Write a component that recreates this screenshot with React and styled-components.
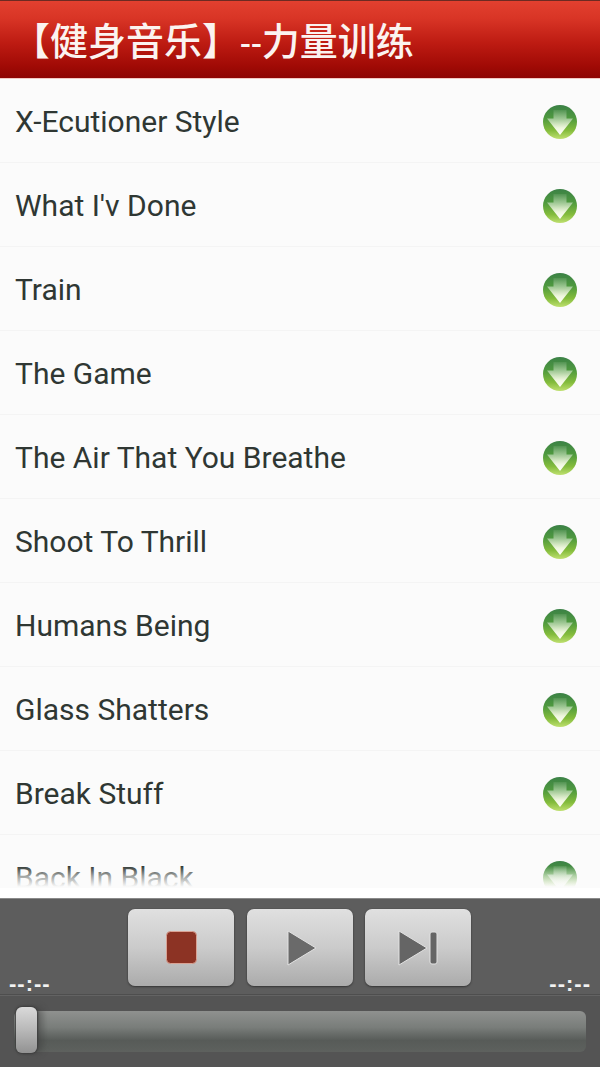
import React from "react";
import styled, { createGlobalStyle } from "styled-components";

const Global = createGlobalStyle`
  html, body { margin: 0; padding: 0; background: #fff; }
  #root { width: 600px; height: 1067px; overflow: hidden; }
`;

const Page = styled.div`
  width: 600px;
  height: 1067px;
  display: flex;
  flex-direction: column;
  font-family: Roboto, "Noto Sans CJK SC", sans-serif;
`;

const Header = styled.header`
  height: 79px;
  box-sizing: border-box;
  flex: none;
  display: flex;
  align-items: center;
  padding: 0 0 0 12px;
  border-top: 1px solid #6d2a22;
  border-bottom: 1px solid #f3c9c4;
  background: linear-gradient(180deg, #e2402f 0%, #d93526 22%, #bd1b12 55%, #a00a05 85%, #8e0503 100%);
`;

const Title = styled.h1`
  margin: 0;
  color: #fbf3f0;
  font: 500 38px/1 "Noto Sans CJK SC", sans-serif;
  white-space: nowrap;
`;

const Dash = styled.span`
  font-family: Roboto, sans-serif;
  font-size: 32px;
`;

const ListArea = styled.div`
  position: relative;
  height: 809px;
  flex: none;
  overflow: hidden;
  background: #fbfbfb;
`;

const Row = styled.div`
  height: 84px;
  box-sizing: border-box;
  display: flex;
  align-items: center;
  justify-content: space-between;
  padding: 2px 22px 0 15px;
  border-bottom: 1px solid #f4f4f4;
`;

const Song = styled.span`
  color: #2f3733;
  font: 400 30px/1 Roboto, sans-serif;
  white-space: nowrap;
`;

const Fade = styled.div`
  position: absolute;
  left: 0;
  right: 0;
  bottom: 0;
  height: 22px;
  background: linear-gradient(180deg, rgba(251,251,251,0) 0%, rgba(251,251,251,0.55) 45%, #fbfbfb 95%);
`;

const Gap = styled.div`
  height: 10px;
  flex: none;
  background: #fff;
`;

const Player = styled.section`
  flex: 1;
  display: flex;
  flex-direction: column;
  background: #595959;
  border-top: 1px solid #8a8a8a;
`;

const Controls = styled.div`
  position: relative;
  height: 96px;
  flex: none;
  box-sizing: border-box;
  display: flex;
  justify-content: center;
  gap: 12.5px;
  padding: 10px 1px 0 0;
  border-bottom: 1px solid #4e4e4e;
  background: #5d5d5d;
`;

const Button = styled.div`
  width: 106px;
  height: 77px;
  box-sizing: border-box;
  border-radius: 7px;
  display: flex;
  align-items: center;
  justify-content: center;
  background: linear-gradient(180deg, #e0e0e0 0%, #cbcbcb 50%, #ababab 100%);
  box-shadow: 0 1px 2px #363636, 0 0 1px #444;
`;

const Time = styled.span`
  position: absolute;
  top: 74px;
  ${(p) => (p.$right ? "right: 9px;" : "left: 9px;")}
  color: #f2f2f2;
  font: 700 22px/1 "Liberation Sans", sans-serif;
  letter-spacing: 1px;
`;

const SeekRow = styled.div`
  flex: 1;
  display: flex;
  align-items: flex-start;
  padding: 15px 14px 0 14px;
  background: #545454;
  border-top: 1px solid #636363;
`;

const Track = styled.div`
  position: relative;
  flex: 1;
  height: 41px;
  border-radius: 6px;
  background: linear-gradient(180deg, #8f918f 0%, #797d7a 40%, #575b58 72%, #5e615e 100%);
`;

const Thumb = styled.div`
  position: absolute;
  left: 2px;
  top: -4px;
  width: 21px;
  height: 46px;
  border-radius: 6px;
  background: linear-gradient(180deg, #dadada 0%, #b8b8b8 50%, #929292 100%);
  box-shadow: 0 0 2px 1px #3c3c3c, 6px 0 6px rgba(60, 60, 60, 0.45);
`;

const BallIcon = ({ id }) => (
  <svg width="36" height="36" viewBox="0 0 36 36" aria-hidden="true">
    <defs>
      <linearGradient id={`ball${id}`} x1="0" y1="0" x2="0" y2="1">
        <stop offset="0" stopColor="#3b8146" />
        <stop offset="0.4" stopColor="#4f9a3e" />
        <stop offset="0.75" stopColor="#84bc3c" />
        <stop offset="1" stopColor="#bfe070" />
      </linearGradient>
      <linearGradient id={`shaft${id}`} x1="0" y1="0" x2="0" y2="1">
        <stop offset="0" stopColor="#ffffff" stopOpacity="0.08" />
        <stop offset="0.45" stopColor="#ffffff" stopOpacity="0.55" />
        <stop offset="0.72" stopColor="#fbfdf0" stopOpacity="0.9" />
        <stop offset="1" stopColor="#ffffff" stopOpacity="1" />
      </linearGradient>
    </defs>
    <circle cx="18" cy="18" r="17" fill={`url(#ball${id})`} />
    <path d="M11.5 6h13v8.5H31L18 31 5 14.5h6.5z" fill={`url(#shaft${id})`} />
  </svg>
);

const StopIcon = () => (
  <svg width="34" height="36" viewBox="0 0 34 36" aria-hidden="true">
    <rect x="2.5" y="1.5" width="30" height="32" rx="4" fill="#8c3324" stroke="#d9a294" strokeWidth="1" />
  </svg>
);

const PlayIcon = () => (
  <svg width="34" height="40" viewBox="0 0 34 40" aria-hidden="true">
    <path d="M5 3 L33 20 L5 37 Z" fill="#6a6a6a" stroke="#e2e2e2" strokeWidth="1" strokeLinejoin="round" />
  </svg>
);

const NextIcon = () => (
  <svg width="42" height="40" viewBox="0 0 42 40" aria-hidden="true">
    <path d="M2 3 L30 20 L2 37 Z" fill="#656565" stroke="#e2e2e2" strokeWidth="1" strokeLinejoin="round" />
    <rect x="33" y="4" width="7" height="32" rx="2" fill="#656565" stroke="#e2e2e2" strokeWidth="1" />
  </svg>
);

const songs = [
  "X-Ecutioner Style",
  "What I'v Done",
  "Train",
  "The Game",
  "The Air That You Breathe",
  "Shoot To Thrill",
  "Humans Being",
  "Glass Shatters",
  "Break Stuff",
  "Back In Black",
];

export default function App() {
  return (
    <Page>
      <Global />
      <Header>
        <Title>
          【健身音乐】<Dash>--</Dash>力量训练
        </Title>
      </Header>
      <ListArea>
        {songs.map((s, i) => (
          <Row key={s}>
            <Song>{s}</Song>
            <BallIcon id={i} />
          </Row>
        ))}
        <Fade />
      </ListArea>
      <Gap />
      <Player>
        <Controls>
          <Time>--:--</Time>
          <Button><StopIcon /></Button>
          <Button><PlayIcon /></Button>
          <Button><NextIcon /></Button>
          <Time $right>--:--</Time>
        </Controls>
        <SeekRow>
          <Track>
            <Thumb />
          </Track>
        </SeekRow>
      </Player>
    </Page>
  );
}
